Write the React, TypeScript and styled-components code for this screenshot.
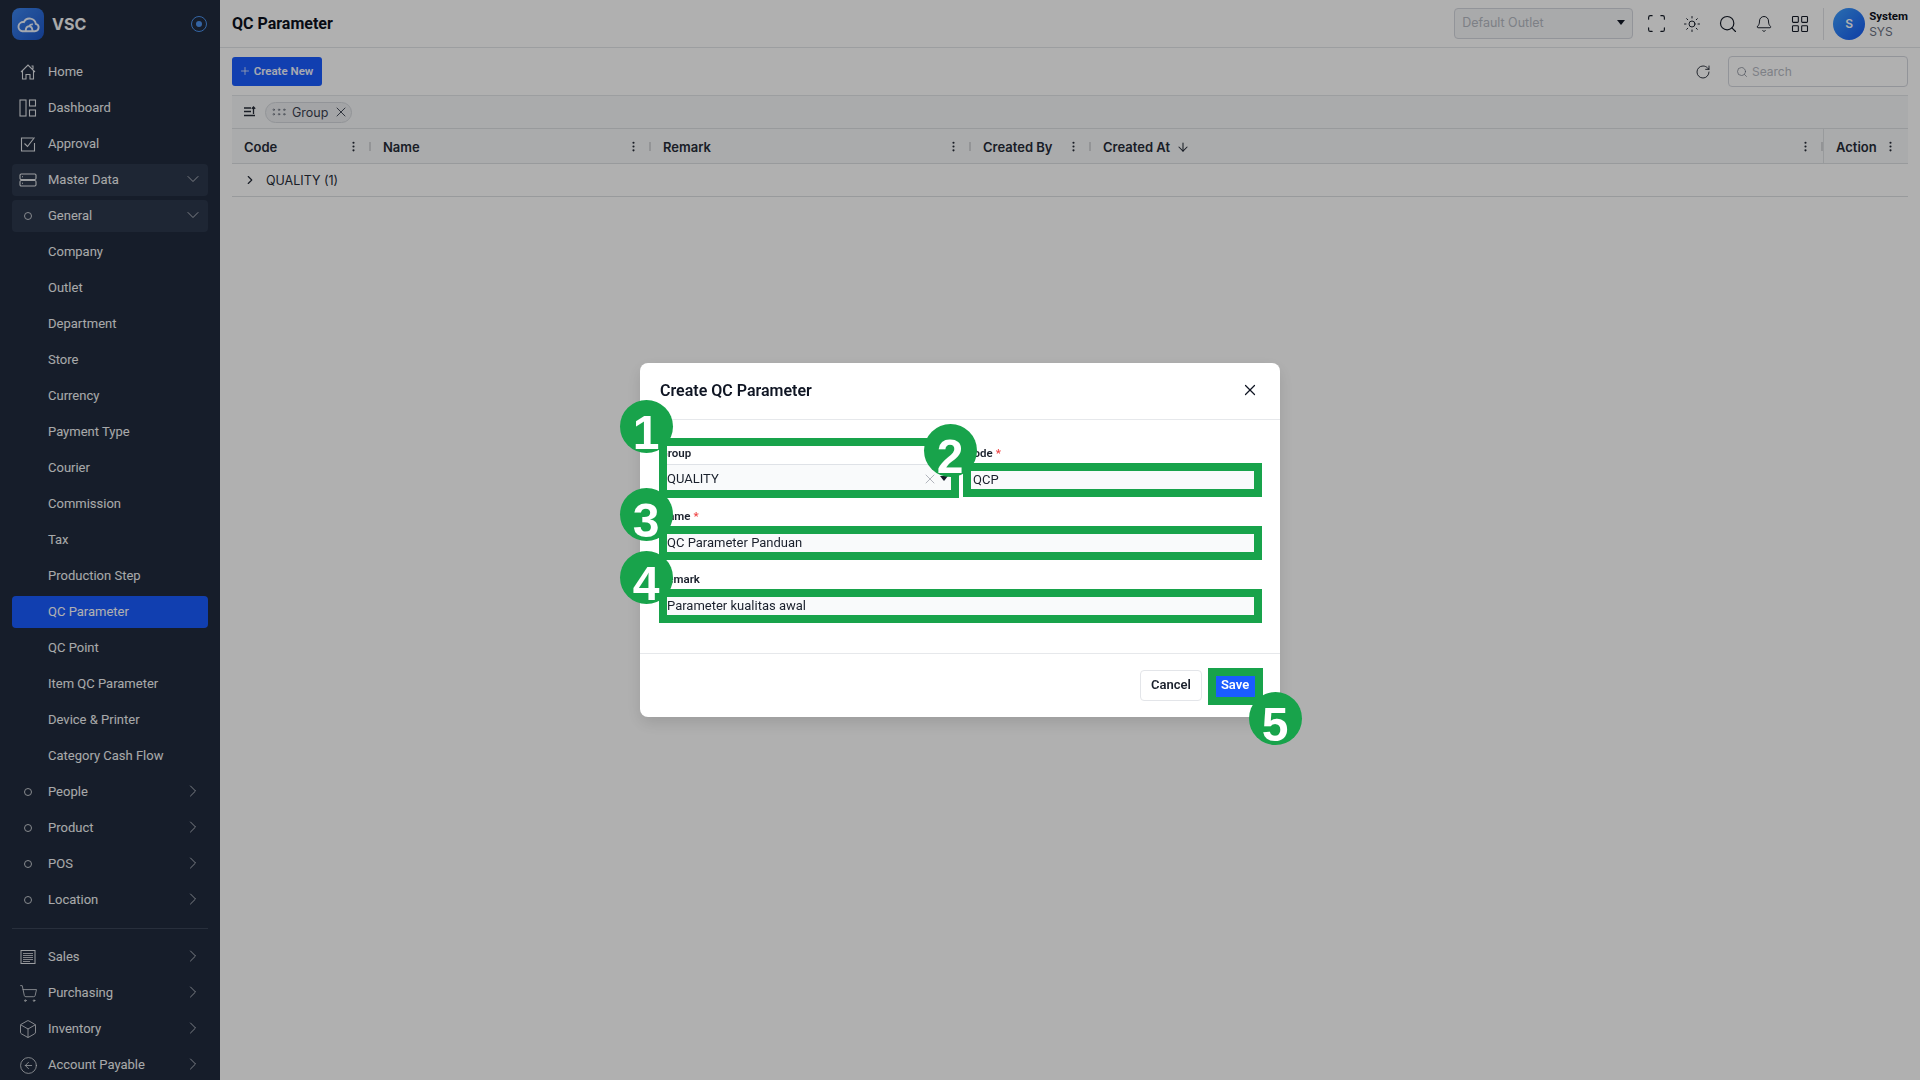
import React from 'react'
import styled, { createGlobalStyle } from 'styled-components'
import {
  ArrowDown,
  Bell,
  Box,
  ChevronDown,
  ChevronRight,
  CircleArrowLeft,
  EllipsisVertical,
  GripHorizontal,
  LayoutGrid,
  Plus,
  RotateCw,
  Scan,
  Search,
  ShoppingCart,
  Sun,
  X,
} from 'lucide-react'

const GlobalStyle = createGlobalStyle`
  html, body {
    margin: 0;
    padding: 0;
    height: 100%;
    overflow: hidden;
    background: #ffffff;
    font-family: Inter, "Liberation Sans", sans-serif;
  }
  * {
    box-sizing: border-box;
  }
  svg {
    flex: none;
  }
`

const Shell = styled.div`
  display: flex;
  width: 1920px;
  height: 1080px;
  overflow: hidden;
`

/* ---------- sidebar ---------- */

const Sidebar = styled.aside`
  width: 220px;
  flex: none;
  height: 100%;
  overflow: hidden;
  background: #202b3e;
  padding: 8px 12px 0;
  font-family: Roboto, sans-serif;
`
const Brand = styled.div`
  display: flex;
  align-items: center;
  gap: 8px;
  height: 32px;
  margin-bottom: 16px;
`
const LogoBox = styled.div`
  width: 32px;
  height: 32px;
  border-radius: 8px;
  background: linear-gradient(135deg, #3d85ee, #1d56c8);
  display: flex;
  align-items: center;
  justify-content: center;
`
const BrandName = styled.div`
  flex: 1;
  font-family: Inter, sans-serif;
  font-size: 16px;
  font-weight: 700;
  color: #f6f7f8;
`
const PinRing = styled.div`
  width: 16px;
  height: 16px;
  border-radius: 50%;
  border: 1px solid #4d93ee;
  margin-right: 1px;
  display: flex;
  align-items: center;
  justify-content: center;
  &::after {
    content: '';
    width: 6px;
    height: 6px;
    border-radius: 50%;
    background: #4d93ee;
  }
`
const NavRow = styled.div<{ $open?: boolean; $active?: boolean }>`
  display: flex;
  align-items: center;
  height: 32px;
  margin-bottom: 4px;
  border-radius: 4px;
  padding: 0 5px 2px 36px;
  position: relative;
  font-size: 13px;
  color: ${({ $active }) => ($active ? '#ffffff' : '#f4f5f6')};
  background: ${({ $active, $open }) =>
    $active ? '#1a5cff' : $open ? '#2c384c' : 'transparent'};
`
const NavIcon = styled.span`
  position: absolute;
  left: 8px;
  top: 8px;
  width: 16px;
  height: 16px;
  display: flex;
  align-items: center;
  justify-content: center;
  color: #e3e5e9;
`
const NavLabel = styled.span`
  flex: 1;
`
const NavChevron = styled.span`
  display: flex;
  color: #d0d3d9;
`
const Dot = styled.span`
  width: 8px;
  height: 8px;
  border-radius: 50%;
  border: 1px solid #c5c8ce;
`
const NavDivider = styled.div`
  height: 1px;
  background: #3a4557;
  margin: 12px 0 12px;
`

const HomeIcon = () => (
  <svg width="18" height="18" viewBox="0 0 18 18" fill="none" stroke="currentColor" strokeWidth="1.1">
    <path d="M2 9 9 2l7 7M3.5 7.5V16h3.5v-4.5h4V16h3.5V7.5M12.5 3h1.5v3" />
  </svg>
)
const DashIcon = () => (
  <svg width="18" height="18" viewBox="0 0 18 18" fill="none" stroke="currentColor" strokeWidth="1.1">
    <rect x="1" y="1" width="6" height="16" />
    <rect x="10.5" y="1" width="6" height="6" />
    <rect x="10.5" y="11" width="6" height="6" />
  </svg>
)
const CheckBoxIcon = () => (
  <svg width="18" height="18" viewBox="0 0 18 18" fill="none" stroke="currentColor" strokeWidth="1.1">
    <path d="M14.5 3H2.5v13h13V8" />
    <path d="M5.5 8.5 8.5 11.5 15.5 2.5" />
  </svg>
)
const RackIcon = () => (
  <svg width="18" height="18" viewBox="0 0 18 18" fill="none" stroke="currentColor" strokeWidth="1.1">
    <rect x="1" y="3" width="16" height="5.5" rx="1.2" />
    <rect x="1" y="9.5" width="16" height="5.5" rx="1.2" />
    <path d="M3 5.7h1M3 12.2h1" />
  </svg>
)
const SalesIcon = () => (
  <svg width="16" height="16" viewBox="0 0 16 16" fill="none" stroke="currentColor" strokeWidth="1">
    <rect x="1" y="1.5" width="14" height="13" />
    <path d="M3 4.5h10M3 6.5h10M3 8.5h10M3 10.5h10M3 12.5h7" strokeWidth="0.8" />
  </svg>
)

const navTop = [
  { label: 'Home', icon: <HomeIcon /> },
  { label: 'Dashboard', icon: <DashIcon /> },
  { label: 'Approval', icon: <CheckBoxIcon /> },
]
const generalItems = [
  'Company',
  'Outlet',
  'Department',
  'Store',
  'Currency',
  'Payment Type',
  'Courier',
  'Commission',
  'Tax',
  'Production Step',
  'QC Parameter',
  'QC Point',
  'Item QC Parameter',
  'Device & Printer',
  'Category Cash Flow',
]
const masterGroups = ['People', 'Product', 'POS', 'Location']
const navBottom = [
  { label: 'Sales', icon: <SalesIcon /> },
  { label: 'Purchasing', icon: <ShoppingCart size={19} strokeWidth={1} /> },
  { label: 'Inventory', icon: <Box size={20} strokeWidth={1} /> },
  { label: 'Account Payable', icon: <CircleArrowLeft size={19} strokeWidth={1} /> },
]

const Arrow = ({ open }: { open?: boolean }) => (
  <NavChevron>
    {open ? <ChevronDown size={20} strokeWidth={1} /> : <ChevronRight size={20} strokeWidth={1} />}
  </NavChevron>
)

/* ---------- main page ---------- */

const Main = styled.main`
  flex: 1;
  min-width: 0;
  display: flex;
  flex-direction: column;
  background: #ffffff;
`
const TopBar = styled.header`
  height: 48px;
  flex: none;
  display: flex;
  align-items: center;
  padding: 0 12px;
  border-bottom: 1px solid #e3e5e8;
`
const PageTitle = styled.div`
  flex: 1;
  font-family: Roboto, sans-serif;
  font-size: 16px;
  font-weight: 700;
  color: #0c111c;
`
const OutletSelect = styled.div`
  width: 179px;
  height: 31px;
  border: 1px solid #d4d7de;
  border-radius: 4px;
  background: #f5f6f8;
  display: flex;
  align-items: center;
  justify-content: space-between;
  padding: 0 7px 2px;
  margin-right: 5px;
  font-size: 12.5px;
  color: #b6bac3;
`
const Caret = styled.span`
  width: 0;
  height: 0;
  border-left: 4px solid transparent;
  border-right: 4px solid transparent;
  border-top: 5px solid #141a26;
`
const TopIcon = styled.span`
  width: 36px;
  display: flex;
  justify-content: center;
  color: #141a26;
`
const TopDivider = styled.span`
  width: 1px;
  height: 32px;
  background: #dfe1e5;
  margin: 0 9px 0 5px;
`
const Avatar = styled.div`
  width: 32px;
  height: 32px;
  border-radius: 50%;
  background: linear-gradient(135deg, #3ea0ff, #1458f0);
  color: #ffffff;
  font-size: 12px;
  font-weight: 600;
  display: flex;
  align-items: center;
  justify-content: center;
  margin-right: 4px;
`
const UserBlock = styled.div`
  display: flex;
  flex-direction: column;
  font-size: 11.5px;
  line-height: 15px;
`
const UserName = styled.span`
  font-family: Roboto, sans-serif;
  font-weight: 700;
  color: #0c111c;
`
const UserCode = styled.span`
  font-size: 12px;
  color: #69707f;
`
const Content = styled.div`
  flex: 1;
  padding: 8px 12px 0;
`
const ActionBar = styled.div`
  display: flex;
  align-items: center;
  height: 31px;
  margin-bottom: 8px;
`
const CreateButton = styled.div`
  width: 90px;
  height: 29px;
  padding: 0 2px 1px 0;
  border-radius: 3px;
  background: #1a5cff;
  color: #f2f5ff;
  font-family: Roboto, sans-serif;
  font-size: 11.5px;
  font-weight: 600;
  display: flex;
  align-items: center;
  justify-content: center;
  gap: 3px;
  margin-right: auto;
`
const RefreshIcon = styled.span`
  display: flex;
  color: #141a26;
  margin-right: 17px;
`
const SearchField = styled.div`
  width: 180px;
  height: 31px;
  border: 1px solid #d4d7de;
  border-radius: 4px;
  display: flex;
  align-items: center;
  gap: 4px;
  padding: 0 7px;
  font-size: 12px;
  color: #b6bac3;
`
const FilterBar = styled.div`
  height: 34px;
  display: flex;
  align-items: center;
  gap: 7px;
  padding: 0 10px;
  background: #f7f8f9;
  border-top: 1px solid #e3e5e8;
  border-bottom: 1px solid #dcdfe3;
`
const GroupChip = styled.div`
  width: 87px;
  height: 21px;
  border: 1px solid #d4d7dc;
  border-radius: 11px;
  background: #eceef1;
  display: flex;
  align-items: center;
  gap: 5px;
  padding: 0 2px 0 4px;
  font-size: 12.5px;
  color: #3b4250;
`
const GripWrap = styled.span`
  display: flex;
  color: #6a707c;
  margin-right: -1px;
`
const HeaderRow = styled.div`
  height: 35px;
  display: grid;
  grid-template-columns: 139px 280px 320px 120px 732px 85px;
  background: #f7f8f9;
  border-bottom: 1px solid #dcdfe3;
`
const HeaderCell = styled.div<{ $pinned?: boolean }>`
  display: flex;
  align-items: center;
  padding: 1px 12px 0;
  font-size: 13px;
  font-weight: 600;
  color: #262c38;
  position: relative;
  border-left: ${({ $pinned }) => ($pinned ? '1px solid #dcdfe3' : 'none')};
`
const HeaderText = styled.span`
  display: flex;
  align-items: center;
  gap: 6px;
  flex: 1;
`
const MenuDots = styled.span`
  display: flex;
  color: #262c38;
  margin-right: -1px;
`
const Resizer = styled.span`
  position: absolute;
  right: 0;
  top: 13px;
  width: 2px;
  height: 9px;
  background: #d5d7da;
`
const GroupRow = styled.div`
  height: 33px;
  display: flex;
  align-items: center;
  gap: 9px;
  padding-left: 11px;
  border-bottom: 1px solid #dcdfe3;
  font-size: 12.5px;
  color: #262c38;
`

/* ---------- modal ---------- */

const Overlay = styled.div`
  position: fixed;
  inset: 0;
  background: rgba(0, 0, 0, 0.31);
  display: flex;
  align-items: center;
  justify-content: center;
`
const Modal = styled.div`
  position: relative;
  width: 640px;
  height: 354px;
  background: #ffffff;
  border-radius: 8px;
  box-shadow: 0 6px 16px rgba(0, 0, 0, 0.12);
  display: flex;
  flex-direction: column;
  font-family: Roboto, sans-serif;
`
const ModalHeader = styled.div`
  height: 57px;
  flex: none;
  display: flex;
  align-items: center;
  justify-content: space-between;
  padding: 0 21px 2px 20px;
  border-bottom: 1px solid #e6e8eb;
`
const ModalTitle = styled.div`
  font-size: 16px;
  font-weight: 600;
  color: #0f1523;
`
const CloseIcon = styled.span`
  display: flex;
  color: #0f1523;
`
const ModalBody = styled.div`
  flex: 1;
  padding: 25px 20px 0;
  display: grid;
  grid-template-columns: 1fr 1fr;
  gap: 12px;
  align-content: start;
`
const Field = styled.div<{ $wide?: boolean }>`
  grid-column: ${({ $wide }) => ($wide ? '1 / -1' : 'auto')};
  display: flex;
  flex-direction: column;
  gap: 3px;
`
const FieldLabel = styled.label`
  font-size: 11.5px;
  line-height: 16px;
  font-weight: 600;
  color: #1a202c;
`
const Required = styled.span`
  color: #ef4444;
  margin-left: 3px;
`
const TextBox = styled.div<{ $select?: boolean }>`
  height: 32px;
  padding: 0 5px ${({ $select }) => ($select ? '3px' : '1px')} 6px;
  display: flex;
  align-items: center;
  background: #f9fafb;
  border: 1px solid #dfe2e7;
  border-radius: 4px;
  font-size: 13px;
  color: #1a202c;
`
const SelectValue = styled.span`
  flex: 1;
`
const ClearIcon = styled.span`
  display: flex;
  color: #8c919b;
  margin-right: 2px;
`
const ModalFooter = styled.div`
  height: 64px;
  flex: none;
  display: flex;
  align-items: center;
  justify-content: flex-end;
  gap: 8px;
  padding: 0 20px;
  border-top: 1px solid #e6e8eb;
`
const CancelButton = styled.div`
  width: 62px;
  height: 31px;
  border: 1px solid #e3e5e9;
  border-radius: 4px;
  padding-bottom: 2px;
  display: flex;
  align-items: center;
  justify-content: center;
  font-size: 13px;
  font-weight: 600;
  color: #1a202c;
`
const SaveButton = styled.div`
  width: 50px;
  height: 31px;
  border-radius: 4px;
  padding-bottom: 2px;
  background: #1a5cff;
  display: flex;
  align-items: center;
  justify-content: center;
  font-size: 13px;
  font-weight: 600;
  color: #ffffff;
`

/* annotation marks drawn over the dialog */
const Mark = styled.div<{ $x: number; $y: number; $w: number; $h: number }>`
  position: absolute;
  left: ${({ $x }) => $x}px;
  top: ${({ $y }) => $y}px;
  width: ${({ $w }) => $w}px;
  height: ${({ $h }) => $h}px;
  border: 8px solid #18a34b;
`
const Badge = styled.div<{ $x: number; $y: number }>`
  position: absolute;
  left: ${({ $x }) => $x - 26.5}px;
  top: ${({ $y }) => $y - 26.5}px;
  width: 53px;
  height: 53px;
  padding-top: 13px;
  border-radius: 50%;
  background: #18a34b;
  color: #ffffff;
  font-family: 'Liberation Sans', sans-serif;
  font-size: 48px;
  font-weight: 700;
  display: flex;
  align-items: center;
  justify-content: center;
`

const marks = [
  { x: 19, y: 75, w: 300, h: 60 },
  { x: 323, y: 100, w: 299, h: 34 },
  { x: 19, y: 163, w: 603, h: 34 },
  { x: 19, y: 226, w: 603, h: 34 },
  { x: 568, y: 305, w: 55, h: 37 },
]
const badges = [
  { n: 1, x: 6, y: 63 },
  { n: 2, x: 310, y: 87 },
  { n: 3, x: 6, y: 151 },
  { n: 4, x: 6, y: 214 },
  { n: 5, x: 635, y: 355 },
]

const columns = [
  { label: 'Code' },
  { label: 'Name' },
  { label: 'Remark' },
  { label: 'Created By' },
  { label: 'Created At', sorted: true },
]

export default function App() {
  return (
    <>
      <GlobalStyle />
      <Shell>
        <Sidebar>
          <Brand>
            <LogoBox>
              <svg width="27" height="27" viewBox="0 0 24 24" fill="none" stroke="#eef4ff" strokeWidth="1.7">
                <path d="M6.5 18h11.2a3.3 3.3 0 0 0 .8-6.5 5.6 5.6 0 0 0-10.6-1.6A4.1 4.1 0 0 0 6.5 18Z" />
                <path d="M9.5 18c0-2.8 1.4-4.5 3-4.5s3 1.7 3 4.5M12.5 13.5c.8-1.2 2-1.8 3.4-1.6" />
              </svg>
            </LogoBox>
            <BrandName>VSC</BrandName>
            <PinRing />
          </Brand>
          {navTop.map((item) => (
            <NavRow key={item.label}>
              <NavIcon>{item.icon}</NavIcon>
              <NavLabel>{item.label}</NavLabel>
            </NavRow>
          ))}
          <NavRow $open>
            <NavIcon>
              <RackIcon />
            </NavIcon>
            <NavLabel>Master Data</NavLabel>
            <Arrow open />
          </NavRow>
          <NavRow $open>
            <NavIcon>
              <Dot />
            </NavIcon>
            <NavLabel>General</NavLabel>
            <Arrow open />
          </NavRow>
          {generalItems.map((label) => (
            <NavRow key={label} $active={label === 'QC Parameter'}>
              <NavLabel>{label}</NavLabel>
            </NavRow>
          ))}
          {masterGroups.map((label) => (
            <NavRow key={label}>
              <NavIcon>
                <Dot />
              </NavIcon>
              <NavLabel>{label}</NavLabel>
              <Arrow />
            </NavRow>
          ))}
          <NavDivider />
          {navBottom.map((item) => (
            <NavRow key={item.label}>
              <NavIcon>{item.icon}</NavIcon>
              <NavLabel>{item.label}</NavLabel>
              <Arrow />
            </NavRow>
          ))}
        </Sidebar>

        <Main>
          <TopBar>
            <PageTitle>QC Parameter</PageTitle>
            <OutletSelect>
              Default Outlet
              <Caret />
            </OutletSelect>
            <TopIcon>
              <Scan size={21} strokeWidth={1.3} />
            </TopIcon>
            <TopIcon>
              <Sun size={18} strokeWidth={1.3} />
            </TopIcon>
            <TopIcon>
              <Search size={20} strokeWidth={1.4} />
            </TopIcon>
            <TopIcon>
              <Bell size={18} strokeWidth={1.3} />
            </TopIcon>
            <TopIcon>
              <LayoutGrid size={20} strokeWidth={1.3} />
            </TopIcon>
            <TopDivider />
            <Avatar>S</Avatar>
            <UserBlock>
              <UserName>System</UserName>
              <UserCode>SYS</UserCode>
            </UserBlock>
          </TopBar>
          <Content>
            <ActionBar>
              <CreateButton>
                <Plus size={12} strokeWidth={1.5} />
                Create New
              </CreateButton>
              <RefreshIcon>
                <RotateCw size={16} strokeWidth={1.3} />
              </RefreshIcon>
              <SearchField>
                <Search size={12} strokeWidth={1.3} color="#69707f" />
                Search
              </SearchField>
            </ActionBar>
            <FilterBar>
              <svg width="16" height="16" viewBox="0 0 16 16" fill="none" stroke="#262c38" strokeWidth="1.3">
                <path d="M2 4h7M2 7.5h7M2 11.5h11M11.5 10V3M9.8 4.7l1.7-1.7 1.7 1.7" />
              </svg>
              <GroupChip>
                <GripWrap>
                  <GripHorizontal size={18} strokeWidth={1.1} />
                </GripWrap>
                Group
                <X size={16} strokeWidth={1.4} />
              </GroupChip>
            </FilterBar>
            <HeaderRow>
              {columns.map((col) => (
                <HeaderCell key={col.label}>
                  <HeaderText>
                    {col.label}
                    {col.sorted && <ArrowDown size={14} strokeWidth={1.8} />}
                  </HeaderText>
                  <MenuDots>
                    <EllipsisVertical size={13} strokeWidth={2} />
                  </MenuDots>
                  <Resizer />
                </HeaderCell>
              ))}
              <HeaderCell $pinned>
                <HeaderText>Action</HeaderText>
                <MenuDots>
                  <EllipsisVertical size={13} strokeWidth={2} />
                </MenuDots>
              </HeaderCell>
            </HeaderRow>
            <GroupRow>
              <ChevronRight size={14} strokeWidth={2} />
              QUALITY (1)
            </GroupRow>
          </Content>
        </Main>

        <Overlay>
          <Modal>
            <ModalHeader>
              <ModalTitle>Create QC Parameter</ModalTitle>
              <CloseIcon>
                <X size={18} strokeWidth={1.6} />
              </CloseIcon>
            </ModalHeader>
            <ModalBody>
              <Field>
                <FieldLabel>Group</FieldLabel>
                <TextBox $select>
                  <SelectValue>QUALITY</SelectValue>
                  <ClearIcon>
                    <X size={16} strokeWidth={1} />
                  </ClearIcon>
                  <Caret />
                </TextBox>
              </Field>
              <Field>
                <FieldLabel>
                  Code<Required>*</Required>
                </FieldLabel>
                <TextBox>
                  <SelectValue>QCP</SelectValue>
                </TextBox>
              </Field>
              <Field $wide>
                <FieldLabel>
                  Name<Required>*</Required>
                </FieldLabel>
                <TextBox>
                  <SelectValue>QC Parameter Panduan</SelectValue>
                </TextBox>
              </Field>
              <Field $wide>
                <FieldLabel>Remark</FieldLabel>
                <TextBox>
                  <SelectValue>Parameter kualitas awal</SelectValue>
                </TextBox>
              </Field>
            </ModalBody>
            <ModalFooter>
              <CancelButton>Cancel</CancelButton>
              <SaveButton>Save</SaveButton>
            </ModalFooter>
            {marks.map((m) => (
              <Mark key={`${m.x}-${m.y}`} $x={m.x} $y={m.y} $w={m.w} $h={m.h} />
            ))}
            {badges.map((b) => (
              <Badge key={b.n} $x={b.x} $y={b.y}>
                {b.n}
              </Badge>
            ))}
          </Modal>
        </Overlay>
      </Shell>
    </>
  )
}
